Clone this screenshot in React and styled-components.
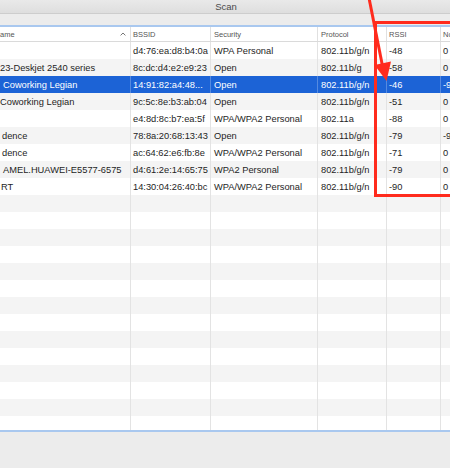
import React from 'react';
import styled, { createGlobalStyle } from 'styled-components';

const GlobalStyle = createGlobalStyle`
  html, body {
    margin: 0;
    padding: 0;
    background: #ececec;
  }
  body {
    font-family: 'Liberation Sans', Arial, sans-serif;
  }
`;

// column template shared by header and rows
const COLUMNS = '131px 80px 107px 69px 54px 1fr';

const Window = styled.div`
  position: relative;
  width: 450px;
  height: 468px;
  overflow: hidden;
  display: flex;
  flex-direction: column;
  background: #ececec;
`;

const TitleBar = styled.div`
  height: 13px;
  flex: none;
  display: flex;
  align-items: center;
  justify-content: center;
  background: linear-gradient(#e9e9e9, #dedede);
  border-bottom: 1px solid #cdcdcd;
  font-size: 9.5px;
  color: #4a4a4a;
  padding-left: 2px;
`;

const Toolbar = styled.div`
  height: 11px;
  flex: none;
  background: #ececec;
`;

const TableFrame = styled.div`
  flex: 1;
  display: flex;
  flex-direction: column;
  overflow: hidden;
  background: #fff;
  border-top: 2px solid #a9c8ef;
  border-bottom: 2px solid #a9c8ef;
`;

const HeaderRow = styled.div`
  flex: none;
  height: 14px;
  display: grid;
  grid-template-columns: ${COLUMNS};
  border-bottom: 1px solid #dadada;
  background: #fff;
`;

const HeaderCell = styled.div`
  position: relative;
  display: flex;
  align-items: center;
  padding-left: ${(p) => p.$pad ?? 3}px;
  font-size: 7.5px;
  color: #555;
  border-right: ${(p) => (p.$last ? 'none' : '1px solid #e0e0e0')};
  white-space: nowrap;
  overflow: hidden;
`;

const SortMark = styled.svg`
  position: absolute;
  right: 4px;
  top: 5px;
`;

const Body = styled.div`
  flex: 1;
  overflow: hidden;
`;

const Row = styled.div`
  height: 17px;
  display: grid;
  grid-template-columns: ${COLUMNS};
  background: ${(p) => (p.$selected ? '#1c63d6' : p.$odd ? '#f4f4f4' : '#fff')};
  color: ${(p) => (p.$selected ? '#fff' : '#1e1e1e')};
`;

const Cell = styled.div`
  display: flex;
  align-items: center;
  padding-left: ${(p) => p.$pad ?? 3}px;
  font-size: 9.3px;
  white-space: nowrap;
  overflow: hidden;
  border-right: ${(p) =>
    p.$last ? 'none' : p.$selected ? '1px solid rgba(255,255,255,0.25)' : '1px solid #e3e3e3'};
`;

const Footer = styled.div`
  height: 36px;
  flex: none;
  background: #ececec;
`;

const Highlight = styled.div`
  position: absolute;
  left: 374px;
  top: 21px;
  width: 120px;
  height: 170px;
  border: 3px solid #ff2b1d;
  pointer-events: none;
`;

const Arrow = styled.svg`
  position: absolute;
  left: 360px;
  top: 0;
  pointer-events: none;
`;

const networks = [
  { name: '', bssid: 'd4:76:ea:d8:b4:0a', security: 'WPA Personal', protocol: '802.11b/g/n', rssi: '-48', noise: '0' },
  { name: '23-Deskjet 2540 series', bssid: '8c:dc:d4:e2:e9:23', security: 'Open', protocol: '802.11b/g', rssi: '-58', noise: '0' },
  { name: 'Coworking Legian', bssid: '14:91:82:a4:48...', security: 'Open', protocol: '802.11b/g/n', rssi: '-46', noise: '-9', selected: true, pad: 3 },
  { name: 'Coworking Legian', bssid: '9c:5c:8e:b3:ab:04', security: 'Open', protocol: '802.11b/g/n', rssi: '-51', noise: '0' },
  { name: '', bssid: 'e4:8d:8c:b7:ea:5f', security: 'WPA/WPA2 Personal', protocol: '802.11a', rssi: '-88', noise: '0' },
  { name: 'dence', bssid: '78:8a:20:68:13:43', security: 'Open', protocol: '802.11b/g/n', rssi: '-79', noise: '-9', pad: 2 },
  { name: 'dence', bssid: 'ac:64:62:e6:fb:8e', security: 'WPA/WPA2 Personal', protocol: '802.11b/g/n', rssi: '-71', noise: '0', pad: 2 },
  { name: 'AMEL.HUAWEI-E5577-6575', bssid: 'd4:61:2e:14:65:75', security: 'WPA2 Personal', protocol: '802.11b/g/n', rssi: '-79', noise: '0', pad: 3 },
  { name: 'RT', bssid: '14:30:04:26:40:bc', security: 'WPA/WPA2 Personal', protocol: '802.11b/g/n', rssi: '-90', noise: '0', pad: 1 },
];

const EMPTY_ROWS = 15;

export default function App() {
  const rows = [
    ...networks,
    ...Array.from({ length: EMPTY_ROWS }, () => ({ name: '', bssid: '', security: '', protocol: '', rssi: '', noise: '' })),
  ];

  return (
    <>
      <GlobalStyle />
      <Window>
        <TitleBar>Scan</TitleBar>
        <Toolbar />
        <TableFrame>
          <HeaderRow>
            <HeaderCell $pad={0}>
              ame
              <SortMark width="6" height="4" viewBox="0 0 6 4">
                <path d="M0.6 3.4 L3 1 L5.4 3.4" fill="none" stroke="#666" strokeWidth="0.9" />
              </SortMark>
            </HeaderCell>
            <HeaderCell $pad={2}>BSSID</HeaderCell>
            <HeaderCell>Security</HeaderCell>
            <HeaderCell>Protocol</HeaderCell>
            <HeaderCell $pad={2}>RSSI</HeaderCell>
            <HeaderCell $pad={2} $last>Noise</HeaderCell>
          </HeaderRow>
          <Body>
            {rows.map((r, i) => (
              <Row key={i} $odd={i % 2 === 1} $selected={r.selected}>
                <Cell $pad={r.pad ?? 0} $selected={r.selected}>{r.name}</Cell>
                <Cell $pad={2} $selected={r.selected}>{r.bssid}</Cell>
                <Cell $selected={r.selected}>{r.security}</Cell>
                <Cell $selected={r.selected}>{r.protocol}</Cell>
                <Cell $pad={2} $selected={r.selected}>{r.rssi}</Cell>
                <Cell $pad={2} $last>{r.noise}</Cell>
              </Row>
            ))}
          </Body>
        </TableFrame>
        <Footer />
        <Highlight />
        <Arrow width="40" height="90" viewBox="360 0 40 90">
          <line x1="369" y1="-2" x2="382.5" y2="66" stroke="#ff2b1d" strokeWidth="3" />
          <polygon points="374.5,65 391,61.5 386.5,81" fill="#ff2b1d" />
        </Arrow>
      </Window>
    </>
  );
}
